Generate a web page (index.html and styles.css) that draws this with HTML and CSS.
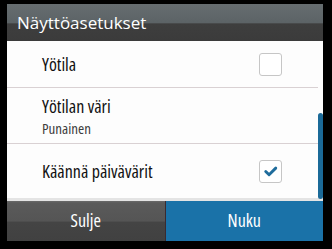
FILE: index.html
```html
<!DOCTYPE html>
<html>
<head>
<meta charset="utf-8">
<link rel="stylesheet" href="styles.css">
</head>
<body>
<div class="screen">
  <div class="header">Näyttöasetukset</div>
  <div class="list">
    <div class="row row1">
      <span class="label">Yötila</span>
      <span class="box"></span>
    </div>
    <div class="row row2">
      <div class="texts">
        <span class="label">Yötilan väri</span>
        <span class="sub">Punainen</span>
      </div>
    </div>
    <div class="row row3">
      <span class="label">Käännä päivävärit</span>
      <span class="box checked">
        <svg viewBox="0 0 22 22" width="22" height="22"><path d="M6 11.5 L9.5 15 L16.5 8" fill="none" stroke="#1f6c9c" stroke-width="3" stroke-linecap="round" stroke-linejoin="round"/></svg>
      </span>
    </div>
    <div class="scrollbar"></div>
  </div>
  <div class="footer">
    <div class="btn close">Sulje</div>
    <div class="btn sleep">Nuku</div>
  </div>
</div>
</body>
</html>
```
FILE: styles.css
```css
html, body {
  margin: 0;
  padding: 0;
  background: #000;
}
body {
  width: 332px;
  height: 249px;
  overflow: hidden;
  font-family: "Open Sans", "Noto Sans", sans-serif;
  font-stretch: 87.5%;
}
.screen {
  margin: 4px 9px 0 7px;
  width: 316px;
  height: 237px;
  display: flex;
  flex-direction: column;
  background: #fdfdfd;
}
.header {
  height: 37px;
  flex: none;
  box-sizing: border-box;
  padding-left: 10px;
  padding-top: 9px;
  color: #fff;
  font-size: 17px;
  font-stretch: 94%;
  line-height: 20px;
  background: linear-gradient(#666d70 0%, #5c6366 50%, #3e3e3e 54%, #3b3b3b 100%);
}
.list {
  position: relative;
  height: 160px;
  flex: none;
  display: flex;
  flex-direction: column;
  border-bottom: 3px solid #e4e4e4;
  box-sizing: border-box;
}
.row {
  display: flex;
  align-items: center;
  justify-content: space-between;
  box-sizing: border-box;
  padding-left: 35px;
  padding-right: 36px;
  margin-right: 5px;
}
.row1 {
  height: 47px;
  border-bottom: 1px solid #d9d1d3;
}
.row2 {
  height: 56px;
  border-bottom: 1px solid #d9d1d3;
}
.row3 {
  flex: 1;
}
.label {
  font-size: 18px;
  color: #111;
  line-height: 22px;
}
.texts {
  display: flex;
  flex-direction: column;
}
.sub {
  font-size: 15px;
  color: #3e3e3e;
  line-height: 18px;
  margin-top: 2px;
}
.box {
  width: 21px;
  height: 21px;
  border: 1px solid #c6c6c6;
  border-radius: 3px;
  display: flex;
  align-items: center;
  justify-content: center;
  background: #fff;
}
.box svg {
  display: block;
}
.scrollbar {
  position: absolute;
  right: 0;
  top: 72px;
  width: 5px;
  height: 86px;
  border-radius: 3px;
  background: #1b6a98;
}
.footer {
  height: 40px;
  flex: none;
  display: flex;
}
.btn {
  flex: 1;
  display: flex;
  align-items: center;
  justify-content: center;
  color: #fff;
  font-size: 18px;
  padding-bottom: 2px;
  box-sizing: border-box;
}
.close {
  background: linear-gradient(#6a6a6a 0px, #5a5a5a 2px, #555 50%, #444 53%, #414141 100%);
  border-right: 1px solid #3a2a30;
}
.sleep {
  background: #1a72a8;
}
```
